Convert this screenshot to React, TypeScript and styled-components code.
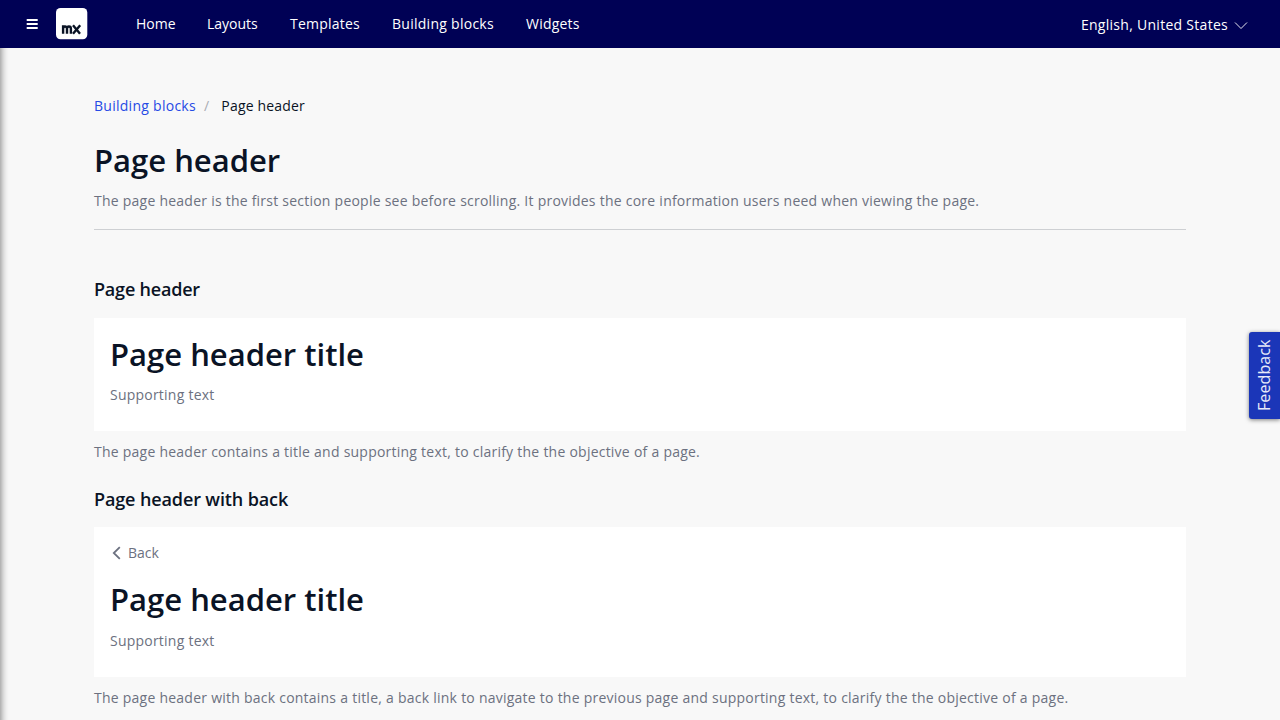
import React from "react";
import styled, { createGlobalStyle } from "styled-components";

const GlobalStyle = createGlobalStyle`
  * { box-sizing: border-box; }
  body {
    margin: 0;
    height: 720px;
    overflow: hidden;
    background: #f8f8f8;
    color: #0a1325;
    font-family: "Open Sans", sans-serif;
    font-size: 14px;
    line-height: 20px;
    font-feature-settings: "liga" 1;
  }
  h1, h2, p { margin: 0; }
`;

const Page = styled.div`
  position: relative;
  height: 720px;
  overflow: hidden;
`;

const Topbar = styled.header`
  position: relative;
  z-index: 2;
  display: flex;
  align-items: center;
  height: 48px;
  padding: 0 32px 0 26px;
  background: #000155;
  color: #fff;
`;

const MenuIcon = styled.svg`
  display: block;
  width: 12px;
  height: 12px;
`;

const Logo = styled.div`
  display: flex;
  margin-left: 18px;
  width: 32px;
  height: 32px;
`;

const Nav = styled.nav`
  display: flex;
  gap: 32px;
  margin-left: 48px;
`;

const NavLink = styled.a<{ $width: number; $tracking: number }>`
  width: ${(p) => p.$width}px;
  letter-spacing: ${(p) => p.$tracking}px;
  white-space: nowrap;
  color: #fff;
`;

const Language = styled.div`
  display: flex;
  align-items: center;
  gap: 6px;
  margin-left: auto;
  padding-top: 2px;
  letter-spacing: 0.28px;
`;

const SidebarShadow = styled.div`
  position: absolute;
  z-index: 1;
  top: 40px;
  left: -10px;
  width: 10px;
  height: 690px;
  box-shadow: 0 0 8px rgba(0, 0, 0, 0.6);
`;

const Content = styled.main`
  padding: 48px 94px 0;
`;

const Breadcrumb = styled.div`
  display: flex;
  gap: 8px;
  letter-spacing: 0.18px;
`;

const CrumbLink = styled.a`
  width: 102px;
  letter-spacing: 0.27px;
  color: #264ae5;
`;

const Slash = styled.span`
  margin-right: 4px;
  color: #a9acb3;
`;

const Title = styled.h1`
  font-size: 31px;
  line-height: 40px;
  font-weight: 600;
`;

const Muted = styled.p`
  color: #6c7180;
  letter-spacing: 0.22px;
  word-spacing: 0.12px;
  white-space: nowrap;
`;

const Intro = styled.section`
  padding: 24px 0 18px;
  border-bottom: 1px solid #ced0d3;

  ${Muted} { margin-top: 11px; }
`;

const Heading = styled.h2<{ $top: number; $bottom: number; $tracking: number }>`
  margin-top: ${(p) => p.$top}px;
  margin-bottom: ${(p) => p.$bottom}px;
  letter-spacing: ${(p) => p.$tracking}px;
  font-size: 18px;
  line-height: 24px;
  font-weight: 600;
`;

const Card = styled.section<{ $height: number; $gap: number }>`
  height: ${(p) => p.$height}px;
  margin-bottom: 11px;
  padding: 16px;
  background: #fff;

  ${Muted} { margin-top: ${(p) => p.$gap}px; }
`;

const Back = styled.div`
  display: flex;
  align-items: center;
  gap: 6px;
  margin-bottom: 16px;
  color: #6c7180;
`;

const Feedback = styled.button`
  position: absolute;
  z-index: 3;
  top: 332px;
  right: 0;
  width: 31px;
  height: 87px;
  padding: 0;
  border: 0;
  border-radius: 3px 0 0 3px;
  background: #1b36b8;
  box-shadow: 0 1px 4px rgba(0, 0, 0, 0.5);
  color: #e8ebf8;
  font: 16px/31px "Open Sans", sans-serif;
  letter-spacing: 0.1px;
  writing-mode: vertical-rl;
`;

const FeedbackLabel = styled.span`
  display: block;
  transform: rotate(180deg);
  text-align: center;
`;

const links = [
  { label: "Home", width: 39, tracking: 0 },
  { label: "Layouts", width: 51, tracking: 0 },
  { label: "Templates", width: 70, tracking: 0.22 },
  { label: "Building blocks", width: 102, tracking: 0.27 },
  { label: "Widgets", width: 54, tracking: 0.22 },
];

export default function App() {
  return (
    <Page>
      <GlobalStyle />
      <Topbar>
        <MenuIcon viewBox="0 0 12 12" stroke="#fff" strokeWidth="2">
          <path d="M.7 2h11M.7 6h11M.7 10h11" />
        </MenuIcon>
        <Logo>
          <svg width="32" height="32" viewBox="0 0 32 32">
            <rect width="31.3" height="31.3" rx="4.5" fill="#fff" />
            <g fill="none" stroke="#0a1325" strokeWidth="2.4">
              <path d="M7.1 25.7v-8.4M7.1 25.7v-5a1.9 2.1 0 0 1 3.9 0v5M11 20.7a1.9 2.1 0 0 1 3.9 0v5" />
              <path d="M17 17.3l7 8.4M24.2 17.3l-7.2 8.4" />
            </g>
          </svg>
        </Logo>
        <Nav>
          {links.map((l) => (
            <NavLink key={l.label} $width={l.width} $tracking={l.tracking}>{l.label}</NavLink>
          ))}
        </Nav>
        <Language>
          English, United States
          <svg width="14" height="14" viewBox="0 0 14 14" fill="none" stroke="#fff" strokeWidth="0.9">
            <path d="M1 4.5l6 6 6-6" />
          </svg>
        </Language>
      </Topbar>
      <SidebarShadow />
      <Content>
        <Breadcrumb>
          <CrumbLink>Building blocks</CrumbLink>
          <Slash>/</Slash>
          <span>Page header</span>
        </Breadcrumb>
        <Intro>
          <Title>Page header</Title>
          <Muted>
            The page header is the first section people see before scrolling. It provides the core information users need when viewing the page.
          </Muted>
        </Intro>
        <Heading $top={47} $bottom={17} $tracking={-0.2}>Page header</Heading>
        <Card $height={113} $gap={11}>
          <Title>Page header title</Title>
          <Muted>Supporting text</Muted>
        </Card>
        <Muted>The page header contains a title and supporting text, to clarify the the objective of a page.</Muted>
        <Heading $top={25} $bottom={16} $tracking={-0.12}>Page header with back</Heading>
        <Card $height={150} $gap={12}>
          <Back>
            <svg width="12" height="14" viewBox="0 0 12 14" fill="none" stroke="#6c7180" strokeWidth="1.8">
              <path d="M9.8 1.2L3.8 7l6 5.8" />
            </svg>
            Back
          </Back>
          <Title>Page header title</Title>
          <Muted>Supporting text</Muted>
        </Card>
        <Muted>
          The page header with back contains a title, a back link to navigate to the previous page and supporting text, to clarify the the objective of a page.
        </Muted>
      </Content>
      <Feedback>
        <FeedbackLabel>Feedback</FeedbackLabel>
      </Feedback>
    </Page>
  );
}
